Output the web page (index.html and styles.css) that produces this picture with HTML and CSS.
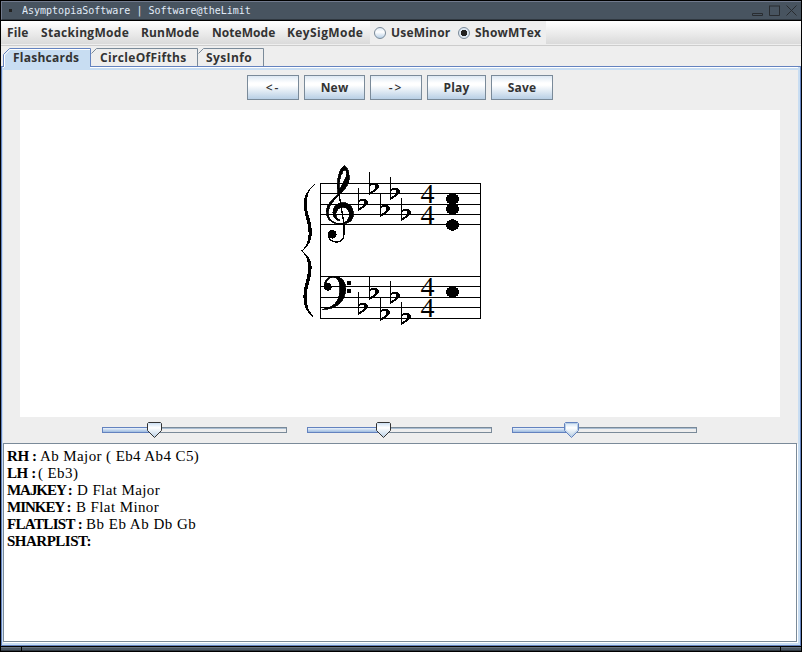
FILE: index.html
```html
<!DOCTYPE html>
<html lang="en">
<head>
<meta charset="utf-8">
<title>AsymptopiaSoftware | Software@theLimit</title>
<link rel="stylesheet" href="styles.css">
</head>
<body>
<div class="window">
  <header class="titlebar">
    <i class="dot"></i><span class="title">AsymptopiaSoftware | Software@theLimit</span>
    <svg class="controls" width="48" height="18" viewBox="751 2 48 18"><path d="M752.5 13.5h10v2h-10zM769.5 6v9.500h10V6M769 6h11M786.500 5.500l10 10M796.500 5.500l-10 10"/></svg>
  </header>
  <nav class="menubar">
    <span class="m1">File</span><span class="m2">StackingMode</span><span class="m3">RunMode</span><span class="m4">NoteMode</span><span class="m5">KeySigMode</span>
    <div class="radios"><label class="r1"><i class="radio"></i>UseMinor</label><label><i class="radio on"></i>ShowMTex</label></div>
  </nav>
  <div class="tabs">
    <div class="tab active t1"><svg width="88" height="21"><path class="edge" d="M.5 18V6.500L6.500.500h81V18"/><path class="fill" d="M1 21V7L7 1h80v20z"/><path class="shine" d="M1.500 19V7L7 1.500h80"/></svg><span>Flashcards</span></div>
    <div class="tab t2"><svg width="107" height="18"><path d="M.5 5.500l5-5h101V18"/></svg><span>CircleOfFifths</span></div>
    <div class="tab t3"><svg width="66" height="18"><path d="M.5 5.500l5-5h60V18"/></svg><span>SysInfo</span></div>
  </div>
  <main class="panel">
    <div class="toolbar">
      <button class="b1">&lt;-</button><button class="b2">New</button><button class="b3">-&gt;</button><button class="b4">Play</button><button class="b5">Save</button>
    </div>
    <div class="canvas">
      <svg width="200" height="175" viewBox="290 155 200 175" shape-rendering="crispEdges">
        <defs><path id="flat" fill-rule="evenodd" d="M0 0h1v12q3-2 6-1q3 1 3 4q-1 3-9 7.500h-1zM1 14q4-2 5 0q1 3-5 6z"/></defs>
        <path class="line" d="M320 183.500h161M320 193.500h161M320 204.500h161M320 214.500h161M320 224.500h161M320 276.500h161M320 286.500h161M320 297.500h161M320 307.500h161M320 318.500h161M320.500 183v136M480.500 183v136"/>
        <g transform="translate(290 155) scale(.33333)">
          <path d="M75 87C48 105 36 135 42 160C46 190 56 205 56 235C56 262 44 280 33 288C44 296 54 310 54 335C56 370 40 390 40 425C40 455 52 478 75 490C56 470 48 450 50 420C52 390 66 365 65 335C64 312 52 298 36 288C54 276 66 258 66 230C66 200 50 175 50 150C50 120 58 102 75 87z"/>
          <path class="heavy" fill-rule="evenodd" d="M144 118C140 90 142 45 163 31C176 40 180 62 176 82C168 104 146 120 132 136C118 152 112 168 116 184C122 200 138 207 155 206C130 211 108 196 109 168C110 148 128 132 144 118zM148 104C146 80 152 50 165 44C172 50 171 58 166 70C162 80 156 90 148 104z"/>
          <path class="heavy" d="M155 207C180 207 191 193 190 174C189 154 176 143 158 143C140 143 129 156 129 172C129 186 136 196 149 197L149 195C140 190 136 182 138 174C141 162 150 157 160 157C172 158 178 166 178 178C178 192 170 203 155 205z"/>
          <path class="stem" d="M147 118L162 205V235C162 252 156 261 140 261C124 261 116 252 116 240"/>
          <circle cx="127" cy="238" r="13"/>
        </g>
        <g transform="translate(290 240) scale(.33333)">
          <path class="heavy" d="M103 140C100 118 118 109 134 109C158 110 168 128 167 150C165 185 140 208 98 209V208C130 203 149 185 150 150C150 128 146 112 130 112C116 112 108 122 106 138z"/>
          <circle cx="113" cy="140" r="12"/><path d="M171 123h12v12h-12zM171 146h12v12h-12z"/>
        </g>
        <use href="#flat" x="358" y="188"/><use href="#flat" x="369" y="172"/><use href="#flat" x="380" y="194"/><use href="#flat" x="390" y="177"/><use href="#flat" x="401" y="198"/>
        <use href="#flat" x="358" y="292"/><use href="#flat" x="369" y="277"/><use href="#flat" x="380" y="298"/><use href="#flat" x="390" y="281"/><use href="#flat" x="401" y="302"/>
        <g class="time"><text x="420.500" y="203">4</text><text x="420.500" y="224">4</text><text x="420.500" y="296">4</text><text x="420.500" y="317">4</text></g>
        <ellipse cx="452.500" cy="199" rx="6.700" ry="5.700"/><ellipse cx="452.500" cy="209" rx="6.700" ry="5.700"/><ellipse cx="452.500" cy="225" rx="6.700" ry="5.700"/><ellipse cx="452.500" cy="292" rx="6.700" ry="5.700"/>
      </svg>
    </div>
    <div class="sliders">
      <div class="slider s1"><i class="done"></i><svg width="15" height="16"><path d="M1.500.500h12l1 1V8.500L7.500 15.500L.5 8.500v-7z"/></svg></div>
      <div class="slider s2"><i class="done"></i><svg width="15" height="16"><path d="M1.500.500h12l1 1V8.500L7.500 15.500L.5 8.500v-7z"/></svg></div>
      <div class="slider s3"><i class="done"></i><svg width="15" height="16"><defs><linearGradient id="g" x2="0" y2="1"><stop stop-color="#c8ddf2"/><stop offset=".35" stop-color="#fff"/><stop offset="1" stop-color="#b8cfe5"/></linearGradient></defs><path d="M1.500.500h12l1 1V8.500L7.500 15.500L.5 8.500v-7z"/><path class="ring" d="M2 1.500h11l.5.5v6L7.500 14L1.500 8V2z"/></svg></div>
    </div>
    <div class="output">
      <p><b class="k1">RH :</b><span class="v1">Ab Major ( Eb4 Ab4 C5)</span></p>
      <p><b class="k2">LH :</b><span class="v2">( Eb3)</span></p>
      <p><b class="k3">MAJKEY :</b><span class="v3">D Flat Major</span></p>
      <p><b class="k4">MINKEY :</b><span class="v4">B Flat Minor</span></p>
      <p><b class="k5">FLATLIST :</b><span class="v5">Bb Eb Ab Db Gb</span></p>
      <p><b class="k6">SHARPLIST:</b></p>
    </div>
  </main>
  <footer class="grip"><i></i><i></i><i></i></footer>
</div>
</body>
</html>
```
FILE: styles.css
```css
* { box-sizing: border-box; }
body { margin: 0; width: 802px; height: 652px; overflow: hidden; background: #000; color: #333; font: bold 12px/16px "Open Sans", "Noto Sans", sans-serif; }
.window { width: 802px; height: 652px; display: flex; flex-direction: column; border: 1px solid #000; }
.titlebar { height: 19px; flex: none; background: #485460; border-top: 1px solid #717a8d; border-left: 1px solid #717a8d; border-bottom: 1px solid #303840; display: flex; align-items: center; padding: 0 2px 0 7px; }
.dot { width: 3px; height: 3px; background: #222; margin-right: 10px; }
.title { font: 10px/16px "DejaVu Sans Mono", monospace; color: #e2ecf8; white-space: pre; }
.controls { margin-left: auto; }
.controls path { fill: none; stroke: #292c30; }
.menubar { margin-top: 1px; height: 25px; flex: none; background: linear-gradient(#fff, #dadada 23px, #eee 23px, #eee 24px, #ccc 24px); display: flex; padding-left: 6px; white-space: nowrap; line-height: 23px; }
.menubar > span { flex: none; }
.m1 { width: 34px; letter-spacing: .15px; }
.m2 { width: 100px; letter-spacing: .3px; }
.m3 { width: 71px; letter-spacing: .15px; }
.m4 { width: 75px; letter-spacing: .05px; }
.m5 { width: 83px; letter-spacing: .4px; }
.radios { width: 176px; height: 23px; background: #eee; display: flex; padding-left: 4px; letter-spacing: .2px; }
.radios label { display: flex; align-items: center; }
.radios .r1 { width: 84px; }
.radio { width: 12px; height: 12px; border: 1px solid #7a8a99; border-radius: 50%; background: linear-gradient(#dde8f3, #fff 40%, #b8cfe5); margin-right: 5px; }
.radio.on { background: radial-gradient(circle, #222 0 3px, #dde8f3 3.5px); }
.tabs { height: 20px; flex: none; background: #eee; padding: 2px 0 0 2px; display: flex; }
.tab { height: 18px; display: grid; line-height: 20px; }
.tab > * { grid-area: 1 / 1; }
.tab path { fill: #eee; stroke: #7a8a99; }
.tab.active .edge { fill: none; stroke: #6382bf; }
.tab.active .fill { fill: #c8ddf2; stroke: none; }
.tab.active .shine { fill: none; stroke: #fff; }
.t1 { width: 88px; height: 21px; position: relative; z-index: 1; }
.t1 span { padding-left: 10px; letter-spacing: .25px; position: relative; }
.t2 { width: 107px; }
.t2 span { padding-left: 9px; letter-spacing: .33px; }
.t3 span { padding-left: 8px; letter-spacing: .4px; }
.panel { height: 580px; flex: none; background: #eee; border: 1px solid #6382bf; box-shadow: inset 1px 0 #c8ddf2, inset -2px 0 #c8ddf2, inset 0 1px #fff, inset 0 3px #c8ddf2, inset 0 -2px #c8ddf2; display: flex; flex-direction: column; padding: 8px 2px 3px 1px; }
.toolbar { height: 25px; flex: none; display: flex; gap: 5px; padding-left: 244px; }
.toolbar button { height: 25px; padding: 0; border: 1px solid #7a8a99; background: linear-gradient(#dde8f3, #fff 30%, #fff 40%, #b8cfe5); font: inherit; color: #333; letter-spacing: .2px; }
.toolbar .b1, .toolbar .b3 { width: 52px; letter-spacing: 2px; font-weight: 600; }
.b2 { width: 61px; }
.b4 { width: 59px; }
.b5 { width: 62px; }
.canvas { width: 760px; height: 307px; flex: none; background: #fff; margin: 10px 0 0 17px; padding: 45px 0 0 270px; }
.canvas svg { display: block; }
.line { fill: none; stroke: #000; }
.heavy { stroke: #000; stroke-width: 2.5; }
.stem { fill: none; stroke: #000; stroke-width: 4; }
.time { font: 28px "Liberation Serif", serif; fill: #000; }
.sliders { height: 26px; flex: none; display: flex; gap: 20px; padding: 10px 0 0 99px; }
.slider { width: 185px; height: 6px; border: 1px solid #7a8a99; background: linear-gradient(#a9bdd2 1px, #eee 1px); display: flex; }
.done { height: 6px; margin: -1px 0 0 -1px; border: 1px solid #6382bf; border-right: 0; background: linear-gradient(#eaf2fb, #9dbbe0); }
.slider svg { margin: -6px 0 0 -8px; flex: none; overflow: visible; }
.slider path { fill: url(#g); stroke: #333; }
.s1 .done { width: 53px; }
.s2 .done { width: 77px; }
.s3 .done { width: 60px; }
.s3 path { stroke: #6382bf; }
.s3 .ring { fill: none; stroke: #b8cfe5; }
.output { height: 199px; width: 794px; flex: none; background: #fff; border: 1px solid #7a8a99; box-shadow: 1px 1px #fff; padding: 4px 3px; color: #000; font: 15px/17px "Liberation Serif", serif; }
.output p { margin: 0; height: 17px; display: flex; white-space: pre; }
.output b { flex: none; letter-spacing: -.4px; }
.output .k1 { width: 33px; }
.output .k2 { width: 31px; }
.output .k3 { width: 70px; letter-spacing: -1.05px; }
.output .k4 { width: 69px; letter-spacing: -1px; }
.output .k5 { width: 79px; letter-spacing: -.65px; }
.output .k6 { letter-spacing: -.5px; }
.output span { letter-spacing: .4px; }
.output .v5 { letter-spacing: .5px; }
.grip { margin-top: 1px; height: 4px; flex: none; display: flex; gap: 1px; }
.grip i { background: #485460; border-bottom: 1px solid #303840; border-top: 1px solid #65717e; flex: 1; }
.grip i:first-child, .grip i:last-child { flex: none; width: 20px; }
```
